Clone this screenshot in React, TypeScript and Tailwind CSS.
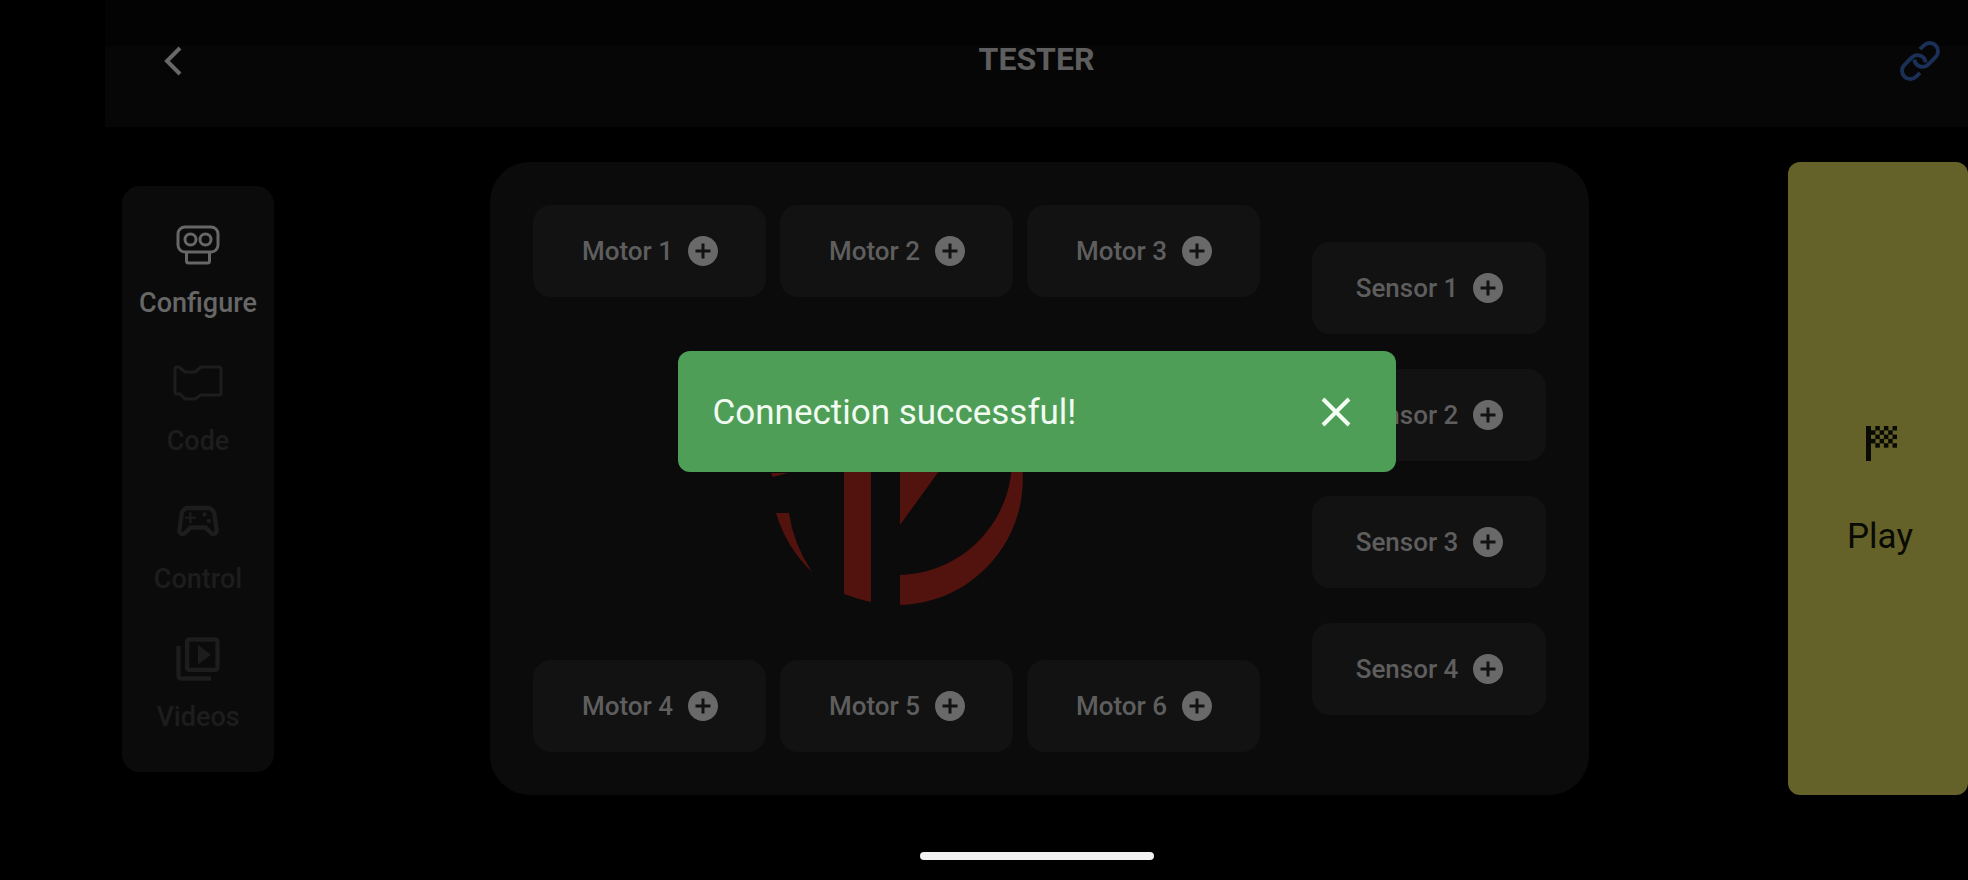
import React from "react";
import { MdAddCircle, MdOutlineSportsEsports, MdOutlineVideoLibrary } from "react-icons/md";

function RobotIcon() {
  return (
    <svg width="44" height="40" viewBox="0 0 44 40" fill="none" stroke="currentColor" strokeWidth="3" aria-hidden="true">
      <rect x="2" y="2" width="40" height="25" rx="7" />
      <circle cx="14.5" cy="14.5" r="5.5" />
      <circle cx="29.5" cy="14.5" r="5.5" />
      <path d="M10.500 27v9q0 2 2 2h19q2 0 2-2v-9" />
    </svg>
  );
}

function BlockIcon() {
  return (
    <svg width="50" height="36" viewBox="0 0 50 36" fill="none" stroke="currentColor" strokeWidth="3" strokeLinejoin="round" aria-hidden="true">
      <path d="M4 2H6L12 7H22L28 2H46Q48 2 48 4V28Q48 30 46 30H28L22 34H12L7 29H4Q2 29 2 27V4Q2 2 4 2Z" />
    </svg>
  );
}

function ChainIcon() {
  return (
    <svg width="40" height="40" viewBox="0 0 39 39" fill="none" stroke="currentColor" strokeWidth="3.8" aria-hidden="true">
      <path d="M19.500 31L15.700 34.700A8 8 0 0 1 4.300 23.300L11.300 16.300A8 8 0 0 1 25 21" />
      <path d="M19.500 8L23.300 4.300A8 8 0 0 1 34.700 15.700L27.700 22.700A8 8 0 0 1 14 18" />
    </svg>
  );
}

function FlagIcon() {
  const squares: [number, number][] = [];
  for (let row = 0; row < 5; row++) {
    for (let col = 0; col < 6; col++) {
      if ((row + col) % 2 === 1) squares.push([col, row]);
    }
  }
  return (
    <svg width="32" height="36" viewBox="0 0 32 36" fill="currentColor" aria-hidden="true" className="ml-1">
      <rect x="0" y="0" width="5" height="35" />
      {squares.map(([c, r]) => (
        <rect key={c + "-" + r} x={5 + c * 4.3} y={r * 4.3} width="4.5" height="4.5" />
      ))}
    </svg>
  );
}

function Logo() {
  return (
    <svg width="252" height="252" viewBox="0 0 252 252" fill="#52120d" role="img" aria-label="Robot logo">
      <path d="M0 120H17L2 124Z" />
      <path d="M5 160H18Q22 190 41 219Q15 194 5 160Z" />
      <path d="M73 12Q86 5 100 3V249Q86 246 73 241Z" />
      <path d="M129 60H210L129 172Z" />
      <path d="M129 252A126 126 0 0 0 224 47A115 115 0 0 1 129 222Z" />
    </svg>
  );
}

function Port({ label }: { label: string }) {
  return (
    <button type="button" className="flex h-[92px] w-full items-center justify-center gap-3 rounded-[18px] bg-[#121212] pl-1 text-[26px] leading-8 font-medium text-[#5e5e5e]">
      {label}
      <MdAddCircle size={36} className="shrink-0 text-[#696969]" />
    </button>
  );
}

const tabs = [
  { label: "Configure", icon: <RobotIcon />, active: true },
  { label: "Code", icon: <BlockIcon />, active: false },
  { label: "Control", icon: <MdOutlineSportsEsports size={52} />, active: false },
  { label: "Videos", icon: <MdOutlineVideoLibrary size={52} />, active: false },
];

export default function App() {
  return (
    <div className="min-h-screen bg-black pl-[105px] font-['Roboto','Liberation_Sans',sans-serif]">
      <div className="relative flex min-h-screen flex-col">
        <header className="bg-[#060606]">
          <div className="h-[46px] bg-[#030303]" />
          <div className="grid h-[81px] grid-cols-3 items-start pr-[28px] pl-[58px]">
            <button type="button" aria-label="Back" className="justify-self-start">
              <svg width="20" height="30" viewBox="0 0 20 30" fill="none" stroke="#686868" strokeWidth="4" aria-hidden="true">
                <path d="M17 2L4 15L17 28" />
              </svg>
            </button>
            <h1 className="-mt-[3px] pr-[30px] text-center text-[32px] leading-8 font-bold text-[#5e5e5e]">TESTER</h1>
            <button type="button" aria-label="Connection" className="-mt-[5px] justify-self-end text-[#1b3057]">
              <ChainIcon />
            </button>
          </div>
        </header>

        <main className="flex flex-1 items-stretch pt-[35px] pl-[17px]">
          <nav className="flex h-[586px] w-[152px] shrink-0 flex-col self-center rounded-[18px] bg-[#0b0b0b] pt-[33px]">
            {tabs.map((t) => (
              <a
                key={t.label}
                href={"#" + t.label.toLowerCase()}
                className={"flex h-[138px] flex-col items-center gap-2 " + (t.active ? "text-[#676767]" : "text-[#1d1d1d]")}
              >
                <span className="flex h-[52px] items-center">{t.icon}</span>
                <span className="text-[27px] leading-[48px] font-medium">{t.label}</span>
              </a>
            ))}
          </nav>

          <section className="mr-[199px] ml-[216px] flex flex-1 gap-[52px] rounded-[40px] bg-[#0b0b0b] p-[43px]">
            <div className="flex flex-1 flex-col items-center justify-between">
              <div className="grid w-full grid-cols-3 gap-[14px]">
                <Port label="Motor 1" />
                <Port label="Motor 2" />
                <Port label="Motor 3" />
              </div>
              <Logo />
              <div className="grid w-full grid-cols-3 gap-[14px]">
                <Port label="Motor 4" />
                <Port label="Motor 5" />
                <Port label="Motor 6" />
              </div>
            </div>
            <div className="flex w-[234px] shrink-0 flex-col justify-center gap-[35px]">
              <Port label="Sensor 1" />
              <Port label="Sensor 2" />
              <Port label="Sensor 3" />
              <Port label="Sensor 4" />
            </div>
          </section>

          <button type="button" className="flex w-[180px] shrink-0 flex-col items-center justify-center gap-[52px] rounded-xl bg-[#646228] pt-7 pl-1 text-[35px] leading-[46px] text-[#0a0a05]">
            <FlagIcon />
            Play
          </button>
        </main>

        <footer className="flex h-[85px] items-end justify-center pb-[20px]">
          <div className="h-2 w-[234px] rounded-full bg-[#f2f2f2]" />
        </footer>

        <div role="status" className="absolute top-[351px] left-1/2 flex h-[121px] w-[718px] -translate-x-1/2 items-center justify-between rounded-xl bg-[#4f9e57] pr-[45px] pl-[35px]">
          <p className="pt-[3px] text-[35px] leading-10 text-[#f1fbf1]">Connection successful!</p>
          <button type="button" aria-label="Dismiss">
            <svg width="30" height="30" viewBox="0 0 30 30" fill="none" stroke="#f4fff4" strokeWidth="4" aria-hidden="true">
              <path d="M2 2L28 28M28 2L2 28" />
            </svg>
          </button>
        </div>
      </div>
    </div>
  );
}
